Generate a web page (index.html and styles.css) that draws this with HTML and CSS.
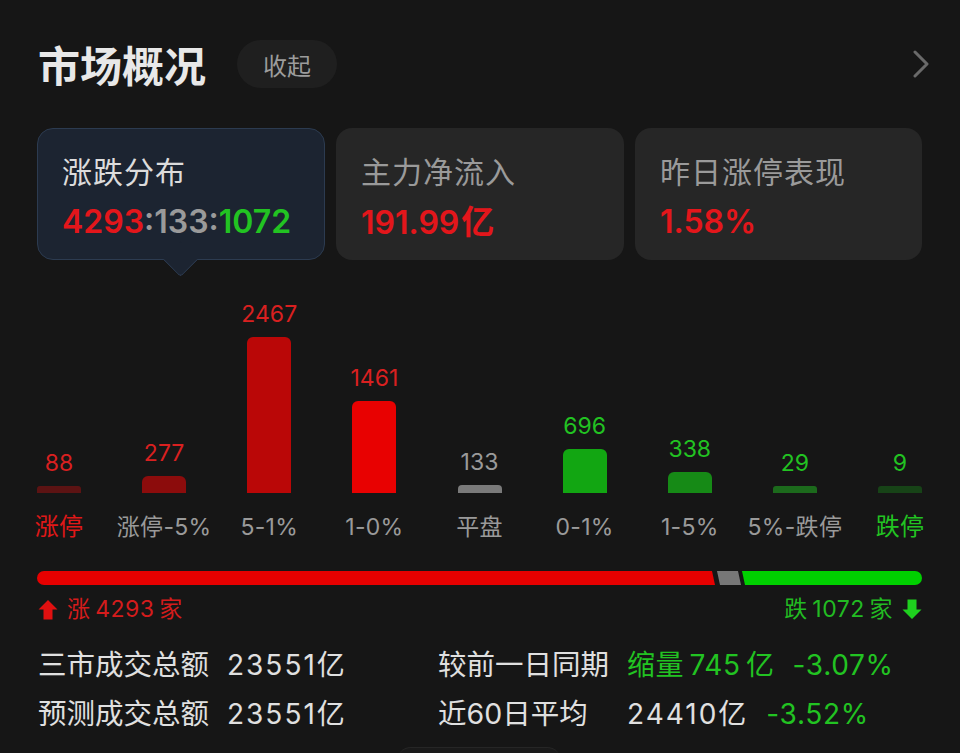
FILE: index.html
```html
<!DOCTYPE html>
<html lang="zh-CN">
<head>
<meta charset="utf-8">
<title>市场概况</title>
<link rel="stylesheet" href="styles.css">
</head>
<body>
<div class="page">
  <header class="header">
    <h1 class="title">市场概况</h1>
    <button class="collapse">收起</button>
    <svg class="chevron" width="18" height="28" viewBox="0 0 18 28"><polyline points="3,2 15,14 3,26" fill="none" stroke="#6a6a6a" stroke-width="3" stroke-linecap="round" stroke-linejoin="round"/></svg>
  </header>

  <section class="cards">
    <div class="card active">
      <div class="card-label">涨跌分布</div>
      <div class="card-value"><span class="red">4293</span><span class="gray">:133:</span><span class="green">1072</span></div>
    </div>
    <div class="card">
      <div class="card-label">主力净流入</div>
      <div class="card-value red">191.99<span class="unit">亿</span></div>
    </div>
    <div class="card">
      <div class="card-label">昨日涨停表现</div>
      <div class="card-value red">1.58%</div>
    </div>
  </section>

  <section class="chart">
    <div class="col">
      <div class="bar-area"><div class="num red">88</div><div class="bar b1" style="height:7px"></div></div>
      <div class="lbl red">涨停</div>
    </div>
    <div class="col">
      <div class="bar-area"><div class="num red">277</div><div class="bar b2" style="height:17px"></div></div>
      <div class="lbl">涨停-5%</div>
    </div>
    <div class="col">
      <div class="bar-area"><div class="num red">2467</div><div class="bar b3" style="height:156px"></div></div>
      <div class="lbl">5-1%</div>
    </div>
    <div class="col">
      <div class="bar-area"><div class="num red">1461</div><div class="bar b4" style="height:92px"></div></div>
      <div class="lbl">1-0%</div>
    </div>
    <div class="col">
      <div class="bar-area"><div class="num gray">133</div><div class="bar b5" style="height:8px"></div></div>
      <div class="lbl">平盘</div>
    </div>
    <div class="col">
      <div class="bar-area"><div class="num green">696</div><div class="bar b6" style="height:44px"></div></div>
      <div class="lbl">0-1%</div>
    </div>
    <div class="col">
      <div class="bar-area"><div class="num green">338</div><div class="bar b7" style="height:21px"></div></div>
      <div class="lbl">1-5%</div>
    </div>
    <div class="col">
      <div class="bar-area"><div class="num green">29</div><div class="bar b8" style="height:7px"></div></div>
      <div class="lbl">5%-跌停</div>
    </div>
    <div class="col">
      <div class="bar-area"><div class="num green">9</div><div class="bar b9" style="height:7px"></div></div>
      <div class="lbl green">跌停</div>
    </div>
  </section>

  <div class="ratio">
    <div class="seg seg-red"></div>
    <div class="seg seg-gray"></div>
    <div class="seg seg-green"></div>
  </div>

  <div class="counts">
    <div class="count red">
      <svg class="arrow" width="20" height="21" viewBox="0 0 20 21"><path d="M10 1 L19.5 10.5 H14.5 V20.5 H5.5 V10.5 H0.5 Z" fill="#e01010"/></svg>
      <span>涨&thinsp;4293&thinsp;家</span>
    </div>
    <div class="count green">
      <span>跌&thinsp;1072&thinsp;家</span>
      <svg class="arrow" width="20" height="21" viewBox="0 0 20 21"><path d="M10 20 L19.5 10.5 H14.5 V0.5 H5.5 V10.5 H0.5 Z" fill="#1ed01e"/></svg>
    </div>
  </div>

  <section class="stats">
    <div class="s-label">三市成交总额</div>
    <div class="s-val">23551亿</div>
    <div class="s-label">较前一日同期</div>
    <div class="s-val"><span class="shrink green">缩量&thinsp;745&thinsp;亿</span><span class="pct green">-3.07%</span></div>
    <div class="s-label">预测成交总额</div>
    <div class="s-val">23551亿</div>
    <div class="s-label">近60日平均</div>
    <div class="s-val">24410亿<span class="pct green">-3.52%</span></div>
  </section>

  <div class="peek"></div>
</div>
</body>
</html>
```
FILE: styles.css
```css
html, body {
  margin: 0;
  padding: 0;
  background: #161616;
  overflow: hidden;
  height: 753px;
}
body {
  font-family: Inter, "Noto Sans CJK SC", sans-serif;
  color: #e2e2e2;
}
.page {
  padding: 0 38px 0 37px;
  display: flex;
  flex-direction: column;
}
.red { color: #e3161b; }
.green { color: #22c322; }
.gray { color: #9a9a9a; }

.header {
  margin-top: 40px;
  height: 48px;
  display: flex;
  align-items: center;
}
.title {
  margin: 0 0 0 1px;
  font-family: "Noto Sans CJK SC", sans-serif;
  font-size: 42px;
  font-weight: 700;
  color: #e8e8e8;
  line-height: 48px;
}
.collapse {
  margin-left: 31px;
  width: 100px;
  height: 48px;
  border: none;
  border-radius: 24px;
  background: #1f1f1f;
  color: #9c9c9c;
  font-family: "Noto Sans CJK SC", sans-serif;
  font-size: 24px;
  padding: 0;
}
.chevron {
  margin-left: auto;
  margin-right: -8px;
}

.cards {
  margin-top: 40px;
  display: grid;
  grid-template-columns: 288px 288px 287px;
  gap: 11px;
}
.card {
  position: relative;
  height: 132px;
  box-sizing: border-box;
  border-radius: 16px;
  background: #262626;
  padding: 22px 0 0 25px;
}
.card.active {
  background: #1c2431;
  border: 1px solid #2c3b50;
  padding: 21px 0 0 24px;
}
.card.active::after {
  content: "";
  position: absolute;
  left: 130px;
  bottom: -13px;
  width: 24px;
  height: 24px;
  background: #1c2431;
  border-right: 1px solid #2c3b50;
  border-bottom: 1px solid #2c3b50;
  border-bottom-right-radius: 4px;
  transform: rotate(45deg);
}
.card-label {
  font-family: "Noto Sans CJK SC", sans-serif;
  font-size: 30px;
  line-height: 40px;
  color: #9a9a9a;
  letter-spacing: 1px;
}
.card.active .card-label { color: #dcdcdc; }
.card-value {
  margin-top: 10px;
  font-size: 32px;
  line-height: 44px;
  font-weight: 600;
}
.unit {
  margin-left: 2px;
  font-size: 33px;
}

.chart {
  margin-top: 30px;
  display: flex;
  justify-content: space-between;
}
.col {
  width: 44px;
  display: flex;
  flex-direction: column;
  align-items: center;
}
.bar-area {
  height: 203px;
  width: 44px;
  display: flex;
  flex-direction: column;
  justify-content: flex-end;
  align-items: center;
}
.num {
  font-size: 23px;
  line-height: 28px;
  margin-bottom: 9px;
  white-space: nowrap;
}
.num.red { color: #d92020; }
.bar {
  width: 44px;
  border-radius: 6px 6px 0 0;
}
.b1 { background: #5c1313; border-radius: 3px 3px 0 0; }
.b2 { background: #8c0c0c; }
.b3 { background: #ba0707; }
.b4 { background: #e80101; }
.b5 { background: #7a7a7a; border-radius: 4px 4px 0 0; }
.b6 { background: #12a612; }
.b7 { background: #168a16; }
.b8 { background: #1c6a1c; border-radius: 3px 3px 0 0; }
.b9 { background: #174317; border-radius: 3px 3px 0 0; }
.lbl {
  margin-top: 19px;
  font-size: 23px;
  line-height: 30px;
  white-space: nowrap;
  color: #9a9a9a;
  letter-spacing: 0.3px;
}
.lbl.red { color: #e01818; font-size: 24px; }
.lbl.green { color: #22c322; font-size: 24px; }

.ratio {
  margin-top: 29px;
  height: 14px;
  display: flex;
}
.seg { height: 14px; }
.seg-red {
  width: 678px;
  background: #e60000;
  border-radius: 7px 0 0 7px;
  clip-path: polygon(0 0, calc(100% - 3px) 0, 100% 100%, 0 100%);
}
.seg-gray {
  width: 24px;
  margin-left: 2px;
  background: #777777;
  clip-path: polygon(0 0, calc(100% - 3px) 0, 100% 100%, 3px 100%);
}
.seg-green {
  flex: 1;
  margin-left: 1px;
  background: #00d000;
  border-radius: 0 7px 7px 0;
  clip-path: polygon(0 0, 100% 0, 100% 100%, 3px 100%);
}

.counts {
  margin-top: 10px;
  height: 28px;
  display: flex;
  justify-content: space-between;
  align-items: center;
}
.count {
  display: flex;
  align-items: center;
  gap: 9px;
  font-size: 23px;
  line-height: 28px;
  letter-spacing: 0.5px;
}
.count.red { color: #d41c1c; margin-left: 1px; }
.count.green { color: #22bb22; }

.stats {
  margin-top: 22px;
  display: grid;
  grid-template-columns: 190px 210px 190px auto;
  row-gap: 9px;
  font-size: 28px;
  line-height: 40px;
}
.s-label {
  margin-left: 1px;
  color: #e0e0e0;
  white-space: nowrap;
  font-size: 28.5px;
}
.s-val {
  color: #e0e0e0;
  white-space: nowrap;
  letter-spacing: 2px;
}
.shrink { letter-spacing: 0.5px; }
.pct { margin-left: 18px; letter-spacing: 0.7px; }

.peek {
  margin-top: 13px;
  align-self: center;
  width: 164px;
  height: 30px;
  margin-left: -2px;
  background: #1a1a1a;
  border-top: 1px solid #262626;
  border-radius: 14px 14px 0 0;
}
```
